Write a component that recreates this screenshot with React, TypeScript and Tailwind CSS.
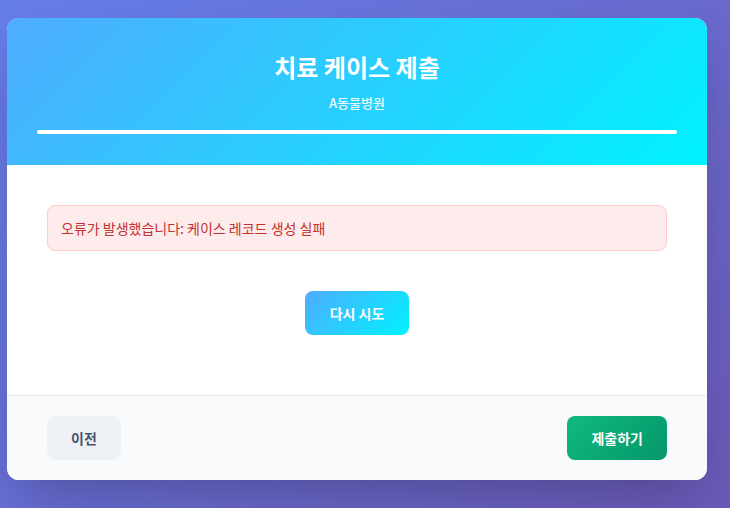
import React from 'react';

const font = { fontFamily: '"Noto Sans CJK KR", "Noto Sans", sans-serif' };

const App: React.FC = () => {
  return (
    <div
      className="min-h-[508px] w-full bg-[linear-gradient(135deg,#667eea_0%,#6b5ab8_100%)] pl-[7px] pr-[23px] pt-[18px] pb-[28px]"
      style={font}
    >
      <div className="w-[700px] overflow-hidden rounded-xl bg-white shadow-2xl">
        {/* header */}
        <div className="bg-[linear-gradient(135deg,#4facfe_0%,#00f2fe_100%)] px-[30px] pt-[33px] pb-[31px] text-center text-white">
          <h1 className="text-[24px] font-bold leading-[32px]">치료 케이스 제출</h1>
          <p className="mt-[11px] text-[13px] font-medium leading-[18px] opacity-90">A동물병원</p>
          <div className="mt-[18px] h-[4px] w-full rounded-full bg-white/30">
            <div className="h-full w-full rounded-full bg-white" />
          </div>
        </div>

        {/* body */}
        <div className="px-[40px] pt-[40px] pb-[60px]">
          <div className="rounded-lg border border-[#fecaca] bg-[#feecec] px-[13px] py-[12px] text-[14px] leading-[20px] text-[#c53030]">
            오류가 발생했습니다: 케이스 레코드 생성 실패
          </div>
          <div className="mt-[40px] flex justify-center">
            <button className="h-[44px] rounded-lg bg-[linear-gradient(135deg,#4facfe_0%,#00f2fe_100%)] px-[25px] text-[14px] font-bold text-white">
              다시 시도
            </button>
          </div>
        </div>

        {/* footer */}
        <div className="flex items-center justify-between border-t border-[#e2e8f0] bg-[#f8fafc] px-[40px] py-[20px]">
          <button className="h-[44px] rounded-lg bg-[#eef2f7] px-[24px] text-[14px] font-bold text-[#4a5568]">
            이전
          </button>
          <button className="h-[44px] rounded-lg bg-[linear-gradient(135deg,#10b981_0%,#059669_100%)] px-[24px] text-[14px] font-bold text-white">
            제출하기
          </button>
        </div>
      </div>
    </div>
  );
};

export default App;
